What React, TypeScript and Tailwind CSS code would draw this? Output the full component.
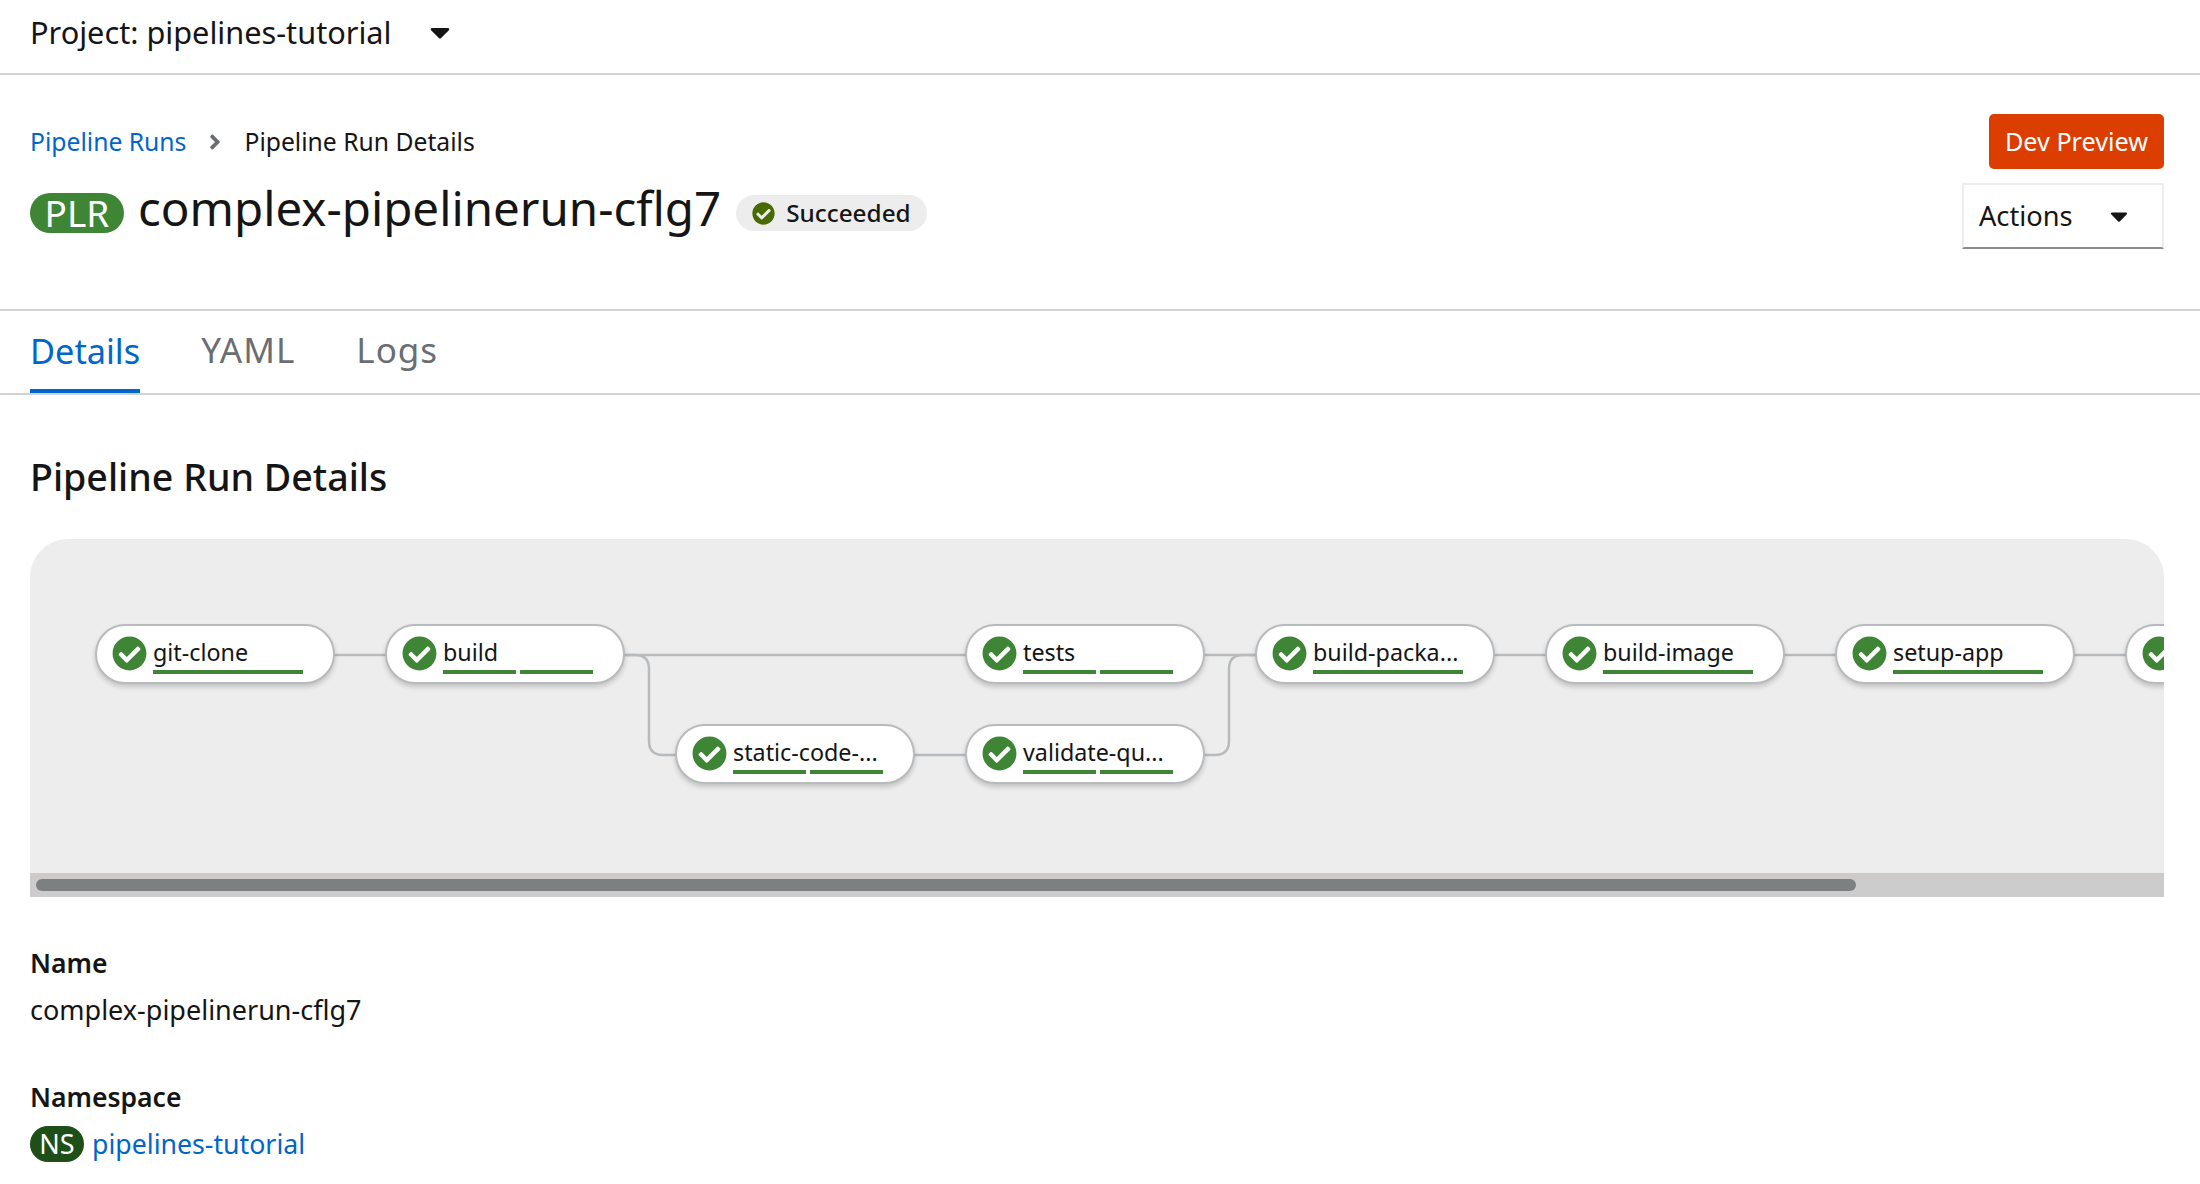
import { FaAngleRight, FaCaretDown, FaCheckCircle } from "react-icons/fa";

const FONT = "font-['Noto_Sans',sans-serif]";

type PipelineNode = { label: string; x: number; y: number; split: boolean };

const NODES: PipelineNode[] = [
    { label: "git-clone", x: 95, y: 85, split: false },
    { label: "build", x: 385, y: 85, split: true },
    { label: "tests", x: 965, y: 85, split: true },
    { label: "static-code-...", x: 675, y: 185, split: true },
    { label: "validate-qu...", x: 965, y: 185, split: true },
    { label: "build-packa...", x: 1255, y: 85, split: false },
    { label: "build-image", x: 1545, y: 85, split: false },
    { label: "setup-app", x: 1835, y: 85, split: false },
    { label: "", x: 2125, y: 85, split: false },
];

function NodePill({ node }: { node: PipelineNode }) {
    return (
        <div
            className="absolute flex h-[60px] w-[240px] items-start rounded-[30px] border-2 border-[#b8bbbe] bg-white pl-[15px] shadow-[0_3px_5px_rgba(3,3,3,0.18)]"
            style={{ left: node.x - 30, top: node.y }}
        >
            <FaCheckCircle className="mt-[10px] shrink-0 text-[35px] text-[#3e8635]" />
            <div className="ml-[6px] w-[150px]">
                <div className="mt-[10px] h-[32px] text-[23.3px] leading-[32px] whitespace-nowrap text-[#151515]">
                    {node.label}
                </div>
                <div className="mt-[2px] flex gap-[4px]">
                    <div className="h-[4px] flex-1 bg-[#3e8635]" />
                    {node.split && <div className="h-[4px] flex-1 bg-[#3e8635]" />}
                </div>
            </div>
        </div>
    );
}

function PipelineGraph() {
    return (
        <div className="relative h-[334px] overflow-hidden rounded-t-[38px] bg-[#ededed]">
            <svg className="absolute left-0 top-0" width="2134" height="334" fill="none" stroke="#b8bbbe" strokeWidth="2.5">
                <path d="M304 116H2100" />
                <path d="M594 116H605Q619 116 619 130V202Q619 216 633 216H940" />
                <path d="M1174 216H1185Q1199 216 1199 202V130Q1199 116 1213 116H1226" />
            </svg>
            {NODES.map((node) => (
                <NodePill key={node.x + "-" + node.y} node={node} />
            ))}
        </div>
    );
}

export default function App() {
    return (
        <div className={`${FONT} h-[1184px] w-[2200px] overflow-hidden bg-white text-[#151515]`}>
            <div className="flex h-[75px] items-center border-b-2 border-[#d2d2d2] px-[30px] pb-[10px]">
                <span className="text-[30.7px] leading-[40px]">Project: pipelines-tutorial</span>
                <FaCaretDown className="ml-[32px] text-[32px]" />
            </div>

            <div className="flex h-[236px] justify-between border-b-2 border-[#d2d2d2] pl-[30px] pr-[36px]">
                <div>
                    <div className="mt-[49px] flex h-[36px] items-center text-[24.7px]">
                        <a className="text-[#0066cc]">Pipeline Runs</a>
                        <FaAngleRight className="mx-[17px] text-[24px] text-[#6a6e73]" />
                        <span>Pipeline Run Details</span>
                    </div>
                    <div className="mt-[23px] flex h-[60px] items-center">
                        <span className="flex h-[40px] w-[94px] items-center justify-center rounded-[20px] bg-[#3e8635] text-[37px] text-white">
                            PLR
                        </span>
                        <h1 className="-mt-[10px] ml-[14px] text-[47.5px] leading-[60px]">complex-pipelinerun-cflg7</h1>
                        <span className="ml-[15px] flex h-[36px] w-[191px] items-center rounded-[18px] bg-[#ededed] pl-[16px]">
                            <FaCheckCircle className="text-[23px] text-[#486b00]" />
                            <span className="ml-[11px] text-[24.3px] font-medium">Succeeded</span>
                        </span>
                    </div>
                </div>
                <div className="flex flex-col items-end pt-[39px]">
                    <button className="h-[55px] w-[175px] rounded-[5px] bg-[#dc3d00] text-[25.2px] text-white">
                        Dev Preview
                    </button>
                    <button className="mt-[14px] flex h-[66px] w-[202px] items-center border-2 border-[#ededed] border-b-[#8a8d90] pl-[15px] text-[27.2px]">
                        Actions
                        <FaCaretDown className="ml-[32px] text-[28px]" />
                    </button>
                </div>
            </div>

            <div className="flex h-[84px] items-end gap-[61px] border-b-2 border-[#d2d2d2] px-[30px]">
                <div className="flex h-[82px] items-center border-b-4 border-[#0066cc] pt-[1px] text-[34.3px] text-[#0066cc]">Details</div>
                <div className="flex h-[82px] items-center pb-[3px] text-[35px] tracking-[1px] text-[#6a6e73]">YAML</div>
                <div className="flex h-[82px] items-center pb-[3px] text-[35px] tracking-[1px] text-[#6a6e73]">Logs</div>
            </div>

            <div className="pl-[30px] pr-[36px]">
                <h2 className="mt-[57px] text-[37.6px] font-medium leading-[50px]">Pipeline Run Details</h2>
                <div className="mt-[37px]">
                    <PipelineGraph />
                    <div className="flex h-[24px] items-center border-t-[6px] border-[#cdcac8] bg-[#cccccc] pb-[6px] pl-[6px]">
                        <div className="h-[12px] w-[1820px] rounded-full bg-[#7d8080]" />
                    </div>
                </div>
                <div className="mt-[48px] text-[26.5px] font-semibold leading-[36px]">Name</div>
                <div className="mt-[11px] text-[27px] leading-[36px]">complex-pipelinerun-cflg7</div>
                <div className="mt-[51px] text-[26.5px] font-semibold leading-[36px]">Namespace</div>
                <div className="mt-[9px] flex items-center">
                    <span className="flex h-[36px] w-[54px] items-center justify-center rounded-[18px] bg-[#1e4f18] text-[27px] text-white">NS</span>
                    <a className="ml-[8px] text-[26.7px] text-[#0066cc]">pipelines-tutorial</a>
                </div>
            </div>
        </div>
    );
}
